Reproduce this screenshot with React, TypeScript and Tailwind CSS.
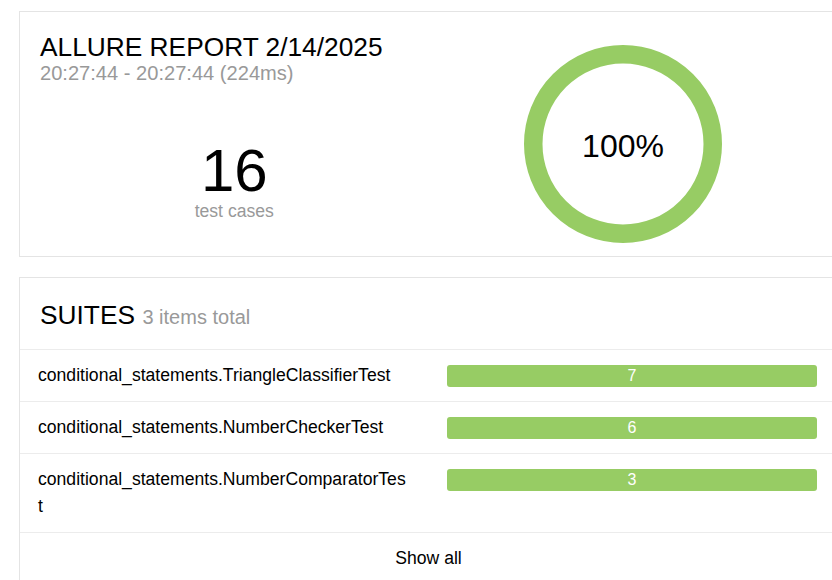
const suites = [
  { name: "conditional_statements.TriangleClassifierTest", count: 7 },
  { name: "conditional_statements.NumberCheckerTest", count: 6 },
  { name: "conditional_statements.NumberComparatorTest", count: 3 },
];

function Donut() {
  return (
    <svg width="198" height="198" viewBox="0 0 198 198">
      <circle cx="99" cy="99" r="89.75" fill="none" stroke="#97cc64" strokeWidth="18.5" />
      <text
        x="99"
        y="101"
        textAnchor="middle"
        dominantBaseline="central"
        fontSize="32"
        fill="#000"
        fontFamily="'Liberation Sans', Arial, sans-serif"
      >
        100%
      </text>
    </svg>
  );
}

export default function App() {
  return (
    <div className="h-[580px] w-[832px] overflow-hidden bg-white pl-[19px] pt-[11px] font-['Liberation_Sans',Arial,sans-serif] text-black">
      {/* summary */}
      <div className="w-[819px] border border-[#e4e4e4] px-[20px] pb-[13px] pt-[20px]">
        <div className="grid grid-cols-2">
          <div>
            <h2 className="text-[26.3px] leading-[30px]">ALLURE REPORT 2/14/2025</h2>
            <div className="text-[20.1px] leading-[23px] text-[#999]">
              20:27:44 - 20:27:44 (224ms)
            </div>
            <div className="mt-[54px] text-center">
              <div className="text-[60px] leading-[64px]">16</div>
              <div className="text-[17.6px] leading-[17px] text-[#999]">test cases</div>
            </div>
          </div>
          <div className="flex justify-center">
            <div className="mt-[13px]">
              <Donut />
            </div>
          </div>
        </div>
      </div>

      {/* suites */}
      <div className="mt-[20px] w-[819px] border border-[#e4e4e4]">
        <div className="pb-[15px] pl-[20px] pt-[22px] leading-[30px]">
          <span className="text-[26.3px]">SUITES</span>{" "}
          <span className="ml-[3px] text-[20px] text-[#999]">3 items total</span>
        </div>
        {suites.map((s) => (
          <div
            key={s.name}
            className="grid grid-cols-[369px_370px] gap-x-[40px] border-t border-[#ececec] py-[12px] pl-[18px] pr-[20px]"
          >
            <div className="break-all text-[17.6px] leading-[27px]">{s.name}</div>
            <div className="mt-[3px] flex h-[22px] items-center justify-center rounded-[3px] bg-[#97cc64] text-[16px] text-white">
              {s.count}
            </div>
          </div>
        ))}
        <div className="border-t border-[#ececec] py-[12px] text-center text-[17.6px] leading-[27px]">
          Show all
        </div>
      </div>
    </div>
  );
}
